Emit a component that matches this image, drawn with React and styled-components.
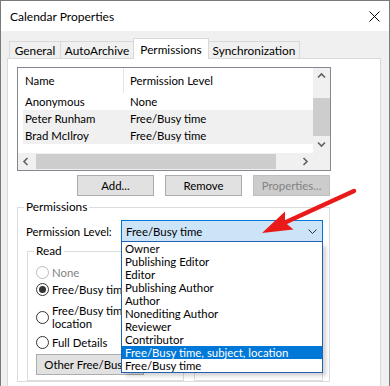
import React from 'react';
import styled, { createGlobalStyle } from 'styled-components';

const Global = createGlobalStyle`
  html, body { margin: 0; padding: 0; background: #ffffff; }
  body { font-family: Lato, "Noto Sans", sans-serif; font-size: 11.4px; color: #000; }
  * { box-sizing: border-box; }
`;

const Window = styled.div`
  position: relative;
  width: 390px;
  height: 386px;
  overflow: hidden;
  border: 1px solid #7a7a7a;
  border-bottom: none;
  background: #f0f0f0;
  display: flex;
  flex-direction: column;
`;

const TitleBar = styled.div`
  height: 30px;
  flex-shrink: 0;
  background: #ffffff;
  display: flex;
  align-items: center;
  justify-content: space-between;
  padding: 0 9px 0 9px;
  font-size: 12px;
`;

const Body = styled.div`
  flex: 1;
  padding: 7px 8px 0 6px;
  display: flex;
  flex-direction: column;
`;

const TabStrip = styled.div`
  display: flex;
  align-items: flex-end;
  height: 20px;
  margin-left: 2px;
  flex-shrink: 0;
  font-size: 11.8px;
`;

const Tab = styled.div`
  position: relative;
  z-index: ${p => (p.$active ? 3 : 1)};
  width: ${p => p.$w}px;
  height: ${p => (p.$active ? 21 : 17)}px;
  margin-bottom: ${p => (p.$active ? -1 : 0)}px;
  margin-right: -1px;
  border: 1px solid #d9d9d9;
  border-bottom: none;
  background: ${p => (p.$active ? '#ffffff' : '#f0f0f0')};
  display: flex;
  align-items: center;
  justify-content: center;
  white-space: nowrap;
`;

const Panel = styled.div`
  position: relative;
  z-index: 2;
  flex-shrink: 0;
  height: 340px;
  width: 374px;
  background: #ffffff;
  border: 1px solid #d9d9d9;
  padding: 8px 0 0 9px;
  display: flex;
  flex-direction: column;
`;

const ListBox = styled.div`
  width: 314px;
  height: 104px;
  border: 1px solid #828790;
  background: #ffffff;
  display: grid;
  grid-template-columns: 1fr 17px;
  grid-template-rows: 1fr 17px;
`;

const ListContent = styled.div`
  padding-left: 5px;
  overflow: hidden;
`;

const ColRow = styled.div`
  display: grid;
  grid-template-columns: 101px 1fr;
  height: ${p => p.$h}px;
  background: ${p => (p.$sel ? '#f0f0f0' : 'transparent')};
  align-items: center;
  white-space: nowrap;
`;

const Cell = styled.div`
  padding-left: ${p => (p.$first ? 2 : 6)}px;
  height: 100%;
  display: flex;
  align-items: center;
  border-right: ${p => (p.$divider ? '1px solid #e5e5e5' : 'none')};
`;

const VScroll = styled.div`
  background: #f0f0f0;
  display: flex;
  flex-direction: column;
`;

const HScroll = styled.div`
  background: #f0f0f0;
  display: flex;
  flex-direction: row;
`;

const Corner = styled.div`
  background: #f0f0f0;
`;

const ArrowBtn = styled.div`
  width: 17px;
  height: 17px;
  flex-shrink: 0;
  display: flex;
  align-items: center;
  justify-content: center;
`;

const Thumb = styled.div`
  background: #cdcdcd;
  flex-shrink: 0;
  ${p => (p.$vertical
    ? `height: ${p.$size}px; margin-top: ${p.$offset}px; width: 100%;`
    : `width: ${p.$size}px; margin-left: ${p.$offset}px; margin-top: 1px; margin-bottom: 1px;`)}
`;

const Spacer = styled.div`
  flex: 1;
`;

const ButtonRow = styled.div`
  width: 313px;
  margin-top: 4px;
  display: flex;
  justify-content: flex-end;
  gap: 11px;
  flex-shrink: 0;
`;

const Button = styled.div`
  width: ${p => p.$w || 77}px;
  height: ${p => p.$h || 21}px;
  border: 1px solid ${p => (p.$disabled ? '#bfbfbf' : '#adadad')};
  background: ${p => (p.$disabled ? '#cccccc' : '#e1e1e1')};
  color: ${p => (p.$disabled ? '#838383' : '#000000')};
  display: flex;
  align-items: center;
  justify-content: center;
  white-space: nowrap;
  overflow: hidden;
  margin-top: ${p => p.$mt || 0}px;
  flex-shrink: 0;
`;

const Group = styled.fieldset`
  margin: 0;
  margin-top: ${p => p.$mt || 0}px;
  min-width: 0;
  width: ${p => p.$w}px;
  border: 1px solid #dcdcdc;
  padding: ${p => p.$pad};
  display: flex;
  flex-direction: column;
  flex-shrink: 0;
`;

const Legend = styled.legend`
  padding: 0 2px;
  margin-left: -2px;
  line-height: 16px;
  font-size: 11.8px;
`;

const LevelRow = styled.div`
  display: flex;
  align-items: center;
  height: 22px;
`;

const Label = styled.div`
  width: 95px;
  flex-shrink: 0;
  white-space: nowrap;
`;

const Combo = styled.div`
  position: relative;
  width: 202px;
  height: 22px;
  border: 1px solid #0078d7;
  background: #cce4f7;
  display: flex;
  align-items: center;
  justify-content: space-between;
  padding: 0 5px 0 4px;
`;

const DropList = styled.div`
  position: absolute;
  top: 100%;
  left: -1px;
  width: 202px;
  z-index: 5;
  background: #ffffff;
  border: 1px solid #1f62b3;
  box-shadow: 4px 4px 4px -1px rgba(0, 0, 0, 0.18);
  display: flex;
  flex-direction: column;
`;

const DropItem = styled.div`
  height: 13px;
  line-height: 13px;
  padding-left: 3px;
  white-space: nowrap;
  background: ${p => (p.$sel ? '#0078d7' : 'transparent')};
  color: ${p => (p.$sel ? '#ffffff' : '#000000')};
`;

const SubGroups = styled.div`
  display: flex;
  gap: 10px;
  margin-top: 1px;
  margin-left: 1px;
`;

const RadioRow = styled.div`
  display: flex;
  align-items: center;
  gap: 3px;
  height: ${p => p.$h || 16}px;
  margin-top: ${p => p.$mt || 0}px;
  line-height: 13px;
  white-space: nowrap;
  color: ${p => (p.$disabled ? '#838383' : '#000000')};
  flex-shrink: 0;
`;

const RadioCircle = styled.span`
  width: 13px;
  height: 13px;
  border-radius: 50%;
  border: 1px solid ${p => (p.$disabled ? '#bcbcbc' : '#333333')};
  background: #ffffff;
  display: flex;
  align-items: center;
  justify-content: center;
  flex-shrink: 0;
  &::after {
    content: '';
    display: ${p => (p.$checked ? 'block' : 'none')};
    width: 7px;
    height: 7px;
    border-radius: 50%;
    background: #333333;
  }
`;

const Overlay = styled.svg`
  position: absolute;
  top: -1px;
  left: -1px;
  width: 390px;
  height: 386px;
  z-index: 10;
  pointer-events: none;
`;

const Chevron = ({ dir }) => {
  const pts = {
    up: '1,5.5 4.5,2 8,5.5',
    down: '1,2.5 4.5,6 8,2.5',
    left: '5.5,1 2,4.5 5.5,8',
    right: '3.5,1 7,4.5 3.5,8',
  }[dir];
  return (
    <svg width="9" height="9" viewBox="0 0 9 9">
      <polyline points={pts} fill="none" stroke="#606060" strokeWidth="1.6" />
    </svg>
  );
};

const Radio = ({ checked, disabled, children, h, mt }) => (
  <RadioRow $h={h} $mt={mt} $disabled={disabled}>
    <RadioCircle $checked={checked} $disabled={disabled} />
    <span>{children}</span>
  </RadioRow>
);

const rows = [
  { name: 'Anonymous', level: 'None', sel: false },
  { name: 'Peter Runham', level: 'Free/Busy time', sel: true },
  { name: 'Brad McIlroy', level: 'Free/Busy time', sel: true },
];

const levels = [
  'Owner',
  'Publishing Editor',
  'Editor',
  'Publishing Author',
  'Author',
  'Nonediting Author',
  'Reviewer',
  'Contributor',
  'Free/Busy time, subject, location',
  'Free/Busy time',
];

export default function App() {
  return (
    <>
      <Global />
      <Window>
        <TitleBar>
          <span>Calendar Properties</span>
          <svg width="11" height="11" viewBox="0 0 11 11">
            <path d="M0.5 0.5 L10.5 10.5 M10.5 0.5 L0.5 10.5" stroke="#000" strokeWidth="1" />
          </svg>
        </TitleBar>
        <Body>
          <TabStrip>
            <Tab $w={52}>General</Tab>
            <Tab $w={74}>AutoArchive</Tab>
            <Tab $w={76} $active>Permissions</Tab>
            <Tab $w={92}>Synchronization</Tab>
          </TabStrip>
          <Panel>
            <ListBox>
              <ListContent>
                <ColRow $h={25}>
                  <Cell $first $divider>Name</Cell>
                  <Cell>Permission Level</Cell>
                </ColRow>
                {rows.map(r => (
                  <ColRow key={r.name} $h={17} $sel={r.sel}>
                    <Cell $first>{r.name}</Cell>
                    <Cell>{r.level}</Cell>
                  </ColRow>
                ))}
              </ListContent>
              <VScroll>
                <ArrowBtn><Chevron dir="up" /></ArrowBtn>
                <Thumb $vertical $size={38} $offset={13} />
                <Spacer />
                <ArrowBtn><Chevron dir="down" /></ArrowBtn>
              </VScroll>
              <HScroll>
                <ArrowBtn><Chevron dir="left" /></ArrowBtn>
                <Thumb $size={240} $offset={1} />
                <Spacer />
                <ArrowBtn><Chevron dir="right" /></ArrowBtn>
              </HScroll>
              <Corner />
            </ListBox>

            <ButtonRow>
              <Button>Add...</Button>
              <Button>Remove</Button>
              <Button $disabled>Properties...</Button>
            </ButtonRow>

            <Group $w={313} $mt={3} $pad="5px 0 0 8px">
              <Legend>Permissions</Legend>
              <LevelRow>
                <Label>Permission Level:</Label>
                <Combo>
                  <span>Free/Busy time</span>
                  <svg width="9" height="5" viewBox="0 0 9 5">
                    <polyline points="0.5,0.5 4.5,4.5 8.5,0.5" fill="none" stroke="#333" strokeWidth="1" />
                  </svg>
                  <DropList>
                    {levels.map((l, i) => (
                      <DropItem key={i} $sel={i === 8}>{l}</DropItem>
                    ))}
                  </DropList>
                </Combo>
              </LevelRow>
              <SubGroups>
                <Group $w={157} $pad="5px 0 5px 8px">
                  <Legend>Read</Legend>
                  <Radio disabled>None</Radio>
                  <Radio checked mt={1}>Free/Busy time</Radio>
                  <Radio h={26} mt={7}>
                    Free/Busy time, subject,<br />location
                  </Radio>
                  <Radio mt={4}>Full Details</Radio>
                  <Button $w={108} $mt={4}>Other Free/Busy...</Button>
                </Group>
                <Group $w={129} $pad="5px 0 5px 8px">
                  <Legend>Write</Legend>
                </Group>
              </SubGroups>
            </Group>
          </Panel>
        </Body>
        <Overlay viewBox="0 0 390 386">
          <line x1="354" y1="191" x2="284" y2="223" stroke="#ea1a1a" strokeWidth="4.5" strokeLinecap="round" />
          <polygon points="262,233 285,211.5 285,222.5 293.5,229.5" fill="#ea1a1a" />
        </Overlay>
      </Window>
    </>
  );
}
